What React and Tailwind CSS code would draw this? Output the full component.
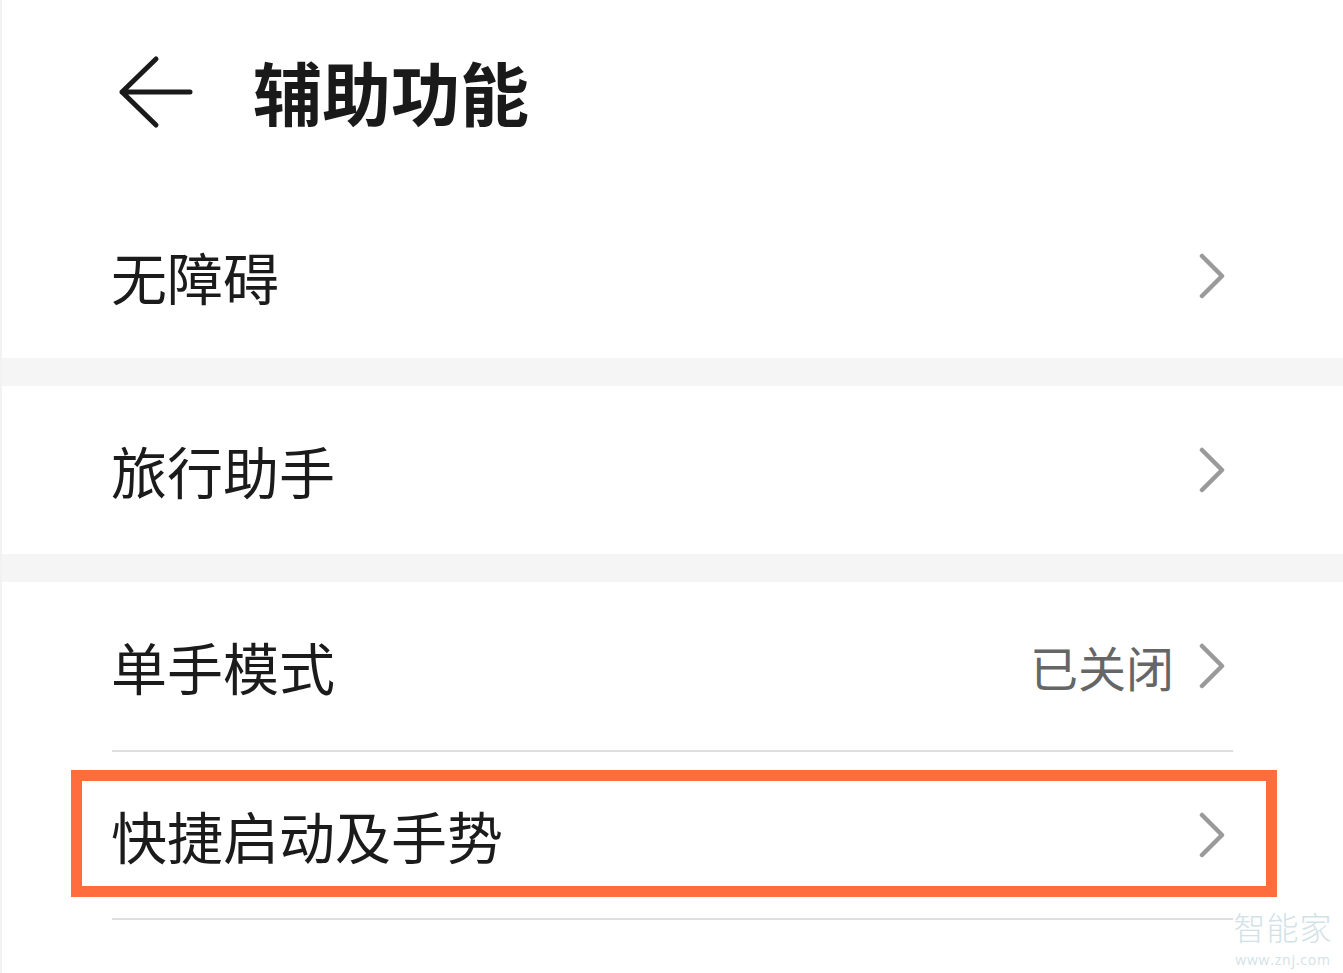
import React from "react";

const font = { fontFamily: '"Noto Sans CJK SC", "Noto Sans", sans-serif' };

function Chevron() {
  return (
    <svg width="28" height="46" viewBox="0 0 28 46" className="shrink-0">
      <path d="M4 3 L24 23 L4 43" fill="none" stroke="#9a9a9a" strokeWidth="4.5" strokeLinecap="round" strokeLinejoin="round" />
    </svg>
  );
}

function Row({ label, value, h }) {
  return (
    <div className={`flex items-center justify-between pl-[109px] pr-[117px] ${h}`}>
      <span className="text-[56px] leading-none text-[#1b1b1b]">{label}</span>
      <div className="flex items-center gap-[24px]">
        {value && <span className="text-[48px] leading-none text-[#666666]">{value}</span>}
        <Chevron />
      </div>
    </div>
  );
}

export default function App() {
  return (
    <div className="relative w-[1343px] h-[973px] bg-white overflow-hidden" style={font}>
      <div className="flex flex-col h-full border-l-2 border-[#f2f2f2]">
        {/* header */}
        <div className="h-[193px] flex items-start pt-[54px] pl-[116px]">
          <svg width="78" height="76" viewBox="0 0 78 76" className="shrink-0">
            <path d="M38 5 L4 38 L38 71 M4 38 L72 38" fill="none" stroke="#1a1a1a" strokeWidth="5" strokeLinecap="round" strokeLinejoin="round" />
          </svg>
          <span className="ml-[57px] mt-[3px] text-[69px] font-bold leading-none text-[#1a1a1a]">辅助功能</span>
        </div>
        <Row label="无障碍" h="h-[165px]" />
        <div className="h-[28px] bg-[#f5f5f5]" />
        <Row label="旅行助手" h="h-[168px]" />
        <div className="h-[28px] bg-[#f5f5f5]" />
        <Row label="单手模式" value="已关闭" h="h-[168px]" />
        <div className="mx-[110px] h-[2px] bg-[#dedede]" />
        <Row label="快捷启动及手势" h="h-[166px]" />
        <div className="mx-[110px] h-[2px] bg-[#dedede]" />
      </div>

      {/* highlight box */}
      <div className="absolute left-[71px] top-[770px] w-[1206px] h-[127px] border-[11px] border-[#ff6c3e]" />

      {/* watermark */}
      <div className="absolute left-[1231px] top-[903px] w-[104px] flex flex-col items-center">
        <span className="block text-[32px] leading-[47px] tracking-[1px] text-[#d3e2e6]" style={{ fontWeight: 300 }}>智能家</span>
        <span className="block text-[14px] leading-[19px] tracking-[0.8px] text-[#d3e2e6]" style={{ fontFamily: '"Open Sans", sans-serif' }}>www.znj.com</span>
      </div>
    </div>
  );
}
